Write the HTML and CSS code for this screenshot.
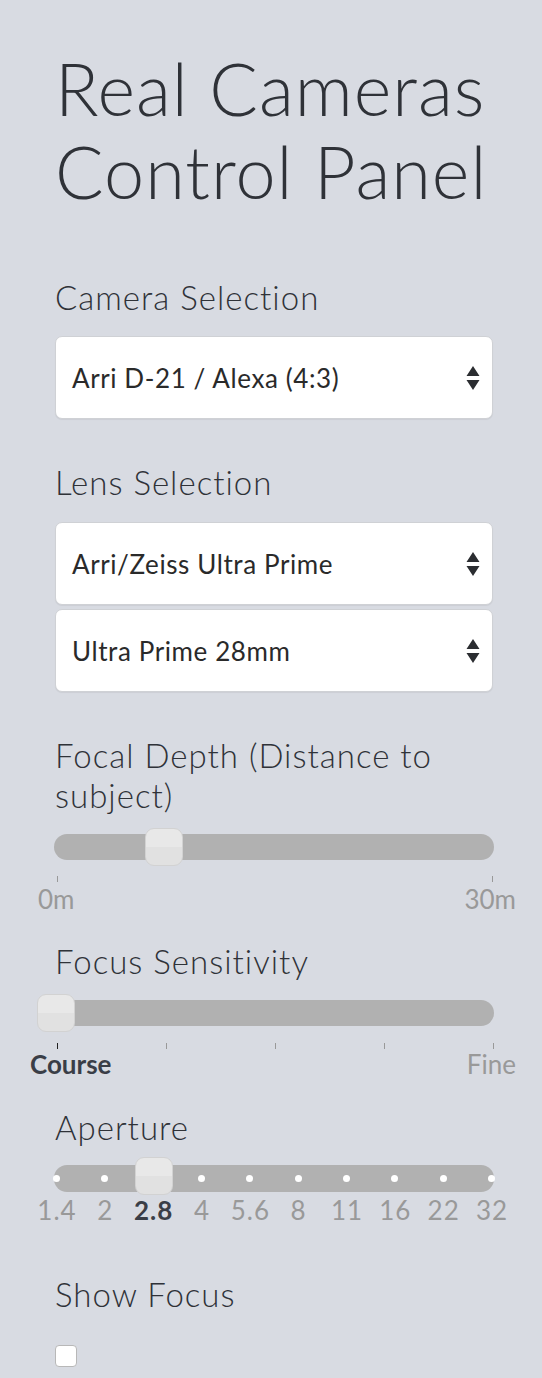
FILE: index.html
```html
<!DOCTYPE html>
<html>
<head>
<meta charset="utf-8">
<link rel="stylesheet" href="styles.css">
</head>
<body>
<div class="panel">
  <h1 class="title">Real Cameras Control Panel</h1>

  <div class="field-label first">Camera Selection</div>
  <div class="select">
    <span>Arri D-21 / Alexa (4:3)</span>
    <svg class="arrows" width="14" height="26" viewBox="0 0 14 26"><path d="M7 1 L13.5 11 L0.5 11 Z M0.5 15 L13.5 15 L7 25 Z" fill="#2b2d31"/></svg>
  </div>

  <div class="field-label">Lens Selection</div>
  <div class="select lens">
    <span>Arri/Zeiss Ultra Prime</span>
    <svg class="arrows" width="14" height="26" viewBox="0 0 14 26"><path d="M7 1 L13.5 11 L0.5 11 Z M0.5 15 L13.5 15 L7 25 Z" fill="#2b2d31"/></svg>
  </div>
  <div class="select second">
    <span>Ultra Prime 28mm</span>
    <svg class="arrows" width="14" height="26" viewBox="0 0 14 26"><path d="M7 1 L13.5 11 L0.5 11 Z M0.5 15 L13.5 15 L7 25 Z" fill="#2b2d31"/></svg>
  </div>

  <div class="field-label focal">Focal Depth (Distance to subject)</div>
  <div class="slider">
    <div class="track"></div>
    <div class="handle" style="left: 91px"></div>
  </div>
  <div class="ticks two"><i></i><i></i></div>
  <div class="scale-labels ends">
    <span>0m</span><span>30m</span>
  </div>

  <div class="field-label gap-small">Focus Sensitivity</div>
  <div class="slider">
    <div class="track"></div>
    <div class="handle" style="left: -17px"></div>
  </div>
  <div class="ticks five"><i class="dark"></i><i></i><i></i><i></i><i></i></div>
  <div class="scale-labels sens">
    <span class="bold">Course</span><span>Fine</span>
  </div>

  <div class="field-label gap-aperture">Aperture</div>
  <div class="slider aperture">
    <div class="track">
      <div class="dots"><b></b><b></b><b class="hidden"></b><b></b><b></b><b></b><b></b><b></b><b></b><b></b></div>
    </div>
    <div class="handle" style="left: 81px"></div>
  </div>
  <div class="stops">
    <span><em>1.4</em></span><span><em>2</em></span><span><em class="bold">2.8</em></span><span><em>4</em></span><span><em>5.6</em></span><span><em>8</em></span><span><em>11</em></span><span><em>16</em></span><span><em>22</em></span><span><em>32</em></span>
  </div>

  <div class="field-label show">Show Focus</div>
  <div class="checkbox"></div>
</div>
</body>
</html>
```

FILE: styles.css
```css
html, body {
  margin: 0;
  padding: 0;
}
body {
  background: #d8dbe2;
  font-family: Lato, "Source Sans Pro", "Open Sans", sans-serif;
  color: #2f3238;
  width: 542px;
  height: 1378px;
  overflow: hidden;
}
.panel {
  padding: 47px 49px 0 55px;
}
.title {
  margin: 0;
  font-size: 72px;
  line-height: 83px;
  font-weight: 300;
  letter-spacing: 1px;
}
.field-label {
  font-size: 33px;
  line-height: 40px;
  font-weight: 300;
  letter-spacing: 1px;
  margin-top: 43px;
}
.field-label.first {
  margin-top: 64px;
}
.field-label.focal {
  margin-top: 43px;
}
.field-label.gap-small {
  margin-top: 28px;
}
.field-label.gap-aperture {
  margin-top: 29px;
}
.field-label.show {
  margin-top: 50px;
}
.select {
  margin-top: 19px;
  height: 81px;
  background: #fff;
  border: 1px solid #cfd1d5;
  border-radius: 7px;
  box-shadow: 0 1px 1px rgba(0,0,0,0.06);
  display: flex;
  align-items: center;
  justify-content: space-between;
  padding: 0 12px 0 16px;
  font-size: 26px;
  letter-spacing: 0.6px;
  color: #2a2a2a;
}
.select.lens {
  margin-top: 20px;
}
.select.second {
  margin-top: 4px;
}
.field-label + .slider {
  margin-top: 13px;
}
.field-label + .slider.aperture {
  margin-top: 10px;
}
.slider {
  position: relative;
  height: 38px;
  margin: 0 -1px;
  display: flex;
  align-items: center;
}
.track {
  flex: 1;
  height: 26px;
  border-radius: 13px;
  background: #b1b1b1;
  position: relative;
}
.handle {
  position: absolute;
  top: 0;
  width: 36px;
  height: 36px;
  border: 1px solid #d2d2d2;
  border-radius: 9px;
  background: linear-gradient(#e8e8e8 0, #e8e8e8 50%, #e1e1e1 50%, #e1e1e1 100%);
}
.ticks {
  display: flex;
  justify-content: space-between;
  margin: 10px 0 0 2px;
  height: 6px;
}
.ticks.five {
  margin-top: 11px;
  margin-right: -1px;
}
.ticks i {
  width: 1px;
  height: 6px;
  background: #999;
}
.ticks i.dark {
  background: #222;
}
.scale-labels {
  display: flex;
  justify-content: space-between;
  margin-top: 1px;
  font-size: 26px;
  line-height: 28px;
  color: #999;
}
.scale-labels.ends {
  margin-top: 3px;
  margin-left: -17px;
  margin-right: -23px;
}
.scale-labels.sens {
  margin-left: -25px;
  margin-right: -23px;
}
.bold {
  font-weight: 700;
  color: #3a3e47;
}
.aperture .track {
  height: 27px;
  margin-top: 4px;
}
.dots {
  position: absolute;
  left: -1px;
  right: -1px;
  top: 10px;
  display: flex;
  justify-content: space-between;
}
.dots b {
  width: 7px;
  height: 7px;
  border-radius: 50%;
  background: #fff;
}
.dots b.hidden {
  visibility: hidden;
}
.stops {
  display: flex;
  justify-content: space-between;
  margin: 1px 1px 0 2px;
  font-size: 26px;
  line-height: 28px;
  color: #999;
}
.stops span {
  width: 0;
  display: flex;
  justify-content: center;
}
.stops em {
  font-style: normal;
  white-space: nowrap;
  letter-spacing: 1px;
}
.checkbox {
  margin-top: 31px;
  width: 20px;
  height: 20px;
  background: #fff;
  border: 1px solid #b8b8b8;
  border-radius: 4px;
}
```
